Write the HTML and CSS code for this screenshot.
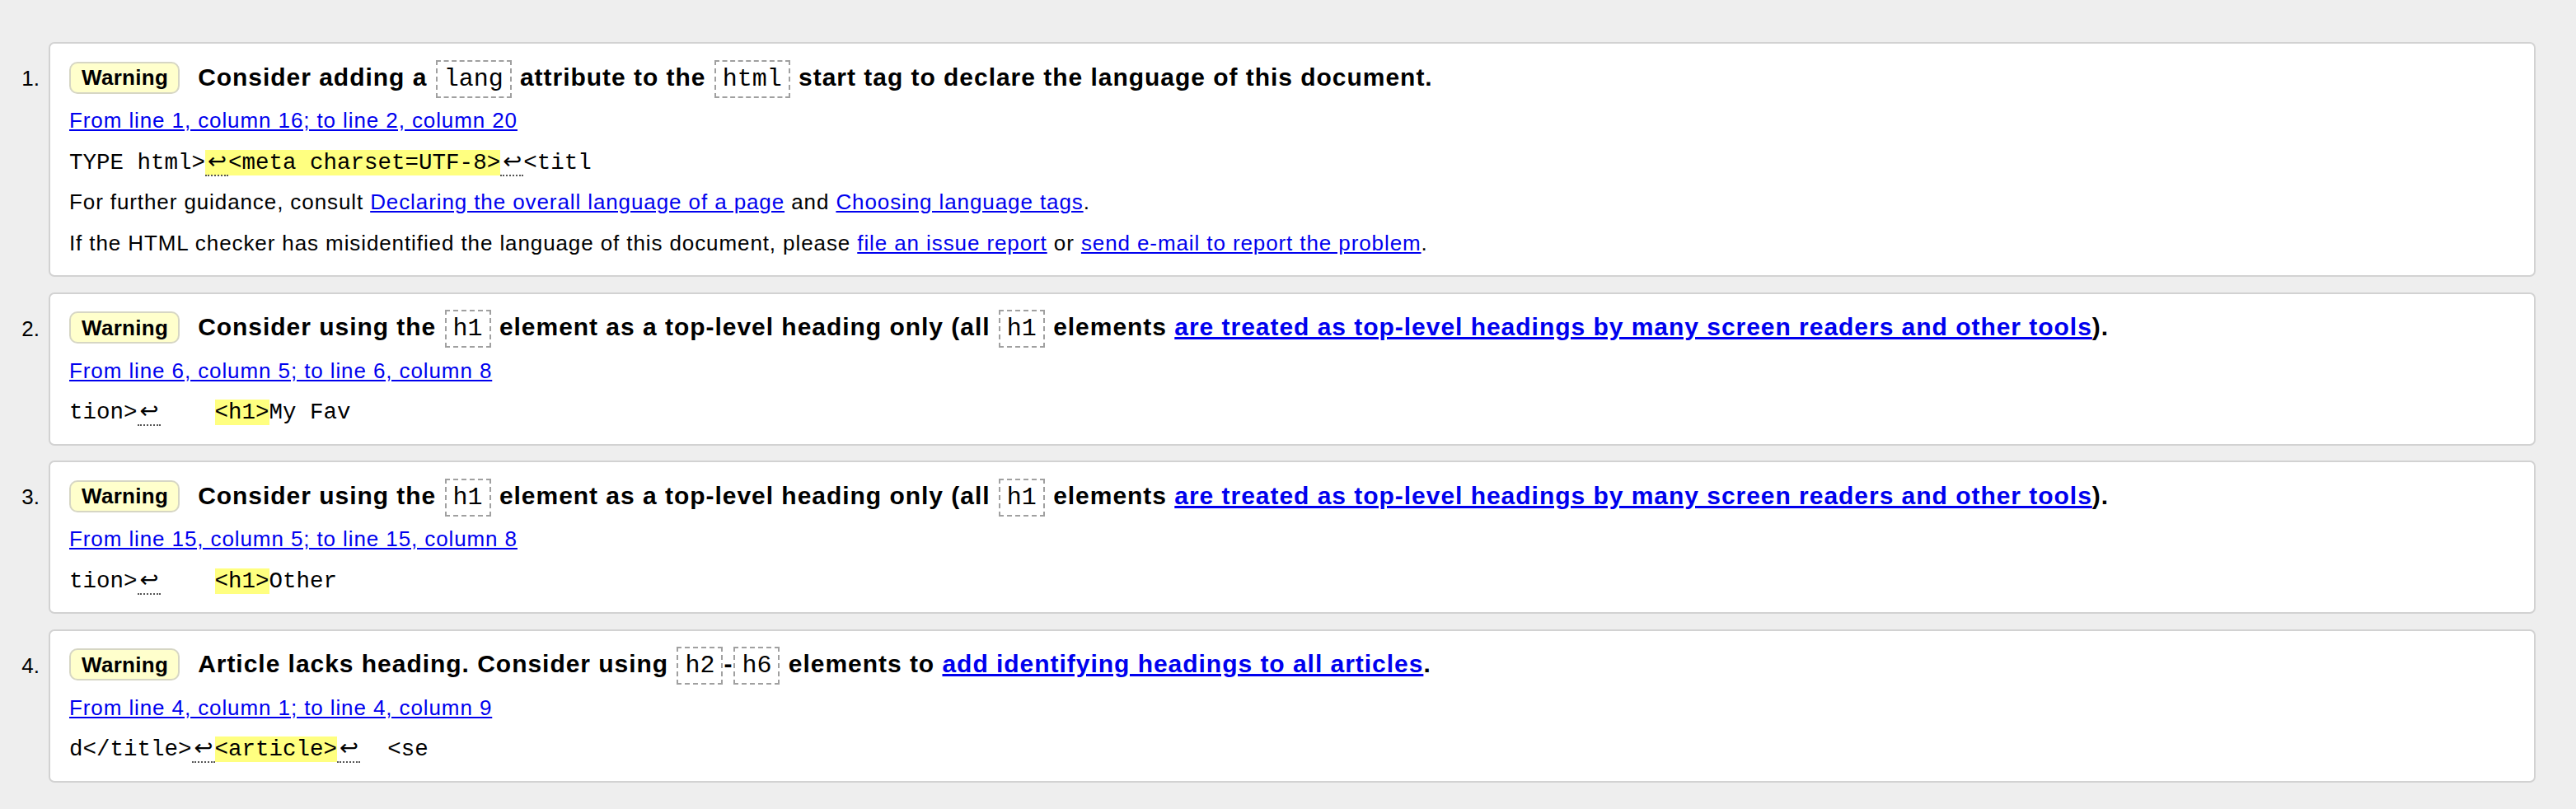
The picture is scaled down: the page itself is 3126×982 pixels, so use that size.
FILE: index.html
```html
<!DOCTYPE html>
<html>
<head>
<meta charset="utf-8">
<title>Messages</title>
<link rel="stylesheet" href="styles.css">
</head>
<body>
<ol class="messages">
  <li class="item">
    <span class="num">1.</span>
    <div class="card">
      <div class="head"><span class="badge">Warning</span><p class="title">Consider adding a <code class="kw">lang</code> attribute to the <code class="kw">html</code> start tag to declare the language of this document.</p></div>
      <p class="row"><a href="#" class="link">From line 1, column 16; to line 2, column 20</a></p>
      <p class="row src">TYPE html&gt;<mark class="hl"><b class="lf">↩</b>&lt;meta charset=UTF-8&gt;</mark><b class="lf">↩</b>&lt;titl</p>
      <p class="row">For further guidance, consult <a href="#" class="link">Declaring the overall language of a page</a> and <a href="#" class="link">Choosing language tags</a>.</p>
      <p class="row">If the HTML checker has misidentified the language of this document, please <a href="#" class="link">file an issue report</a> or <a href="#" class="link">send e-mail to report the problem</a>.</p>
    </div>
  </li>
  <li class="item">
    <span class="num">2.</span>
    <div class="card">
      <div class="head"><span class="badge">Warning</span><p class="title">Consider using the <code class="kw">h1</code> element as a top-level heading only (all <code class="kw">h1</code> elements <a href="#" class="link">are treated as top-level headings by many screen readers and other tools</a>).</p></div>
      <p class="row"><a href="#" class="link">From line 6, column 5; to line 6, column 8</a></p>
      <p class="row src">tion&gt;<b class="lf">↩</b>    <mark class="hl">&lt;h1&gt;</mark>My Fav</p>
    </div>
  </li>
  <li class="item">
    <span class="num">3.</span>
    <div class="card">
      <div class="head"><span class="badge">Warning</span><p class="title">Consider using the <code class="kw">h1</code> element as a top-level heading only (all <code class="kw">h1</code> elements <a href="#" class="link">are treated as top-level headings by many screen readers and other tools</a>).</p></div>
      <p class="row"><a href="#" class="link">From line 15, column 5; to line 15, column 8</a></p>
      <p class="row src">tion&gt;<b class="lf">↩</b>    <mark class="hl">&lt;h1&gt;</mark>Other</p>
    </div>
  </li>
  <li class="item">
    <span class="num">4.</span>
    <div class="card">
      <div class="head"><span class="badge">Warning</span><p class="title">Article lacks heading. Consider using <code class="kw">h2</code>-<code class="kw">h6</code> elements to <a href="#" class="link">add identifying headings to all articles</a>.</p></div>
      <p class="row"><a href="#" class="link">From line 4, column 1; to line 4, column 9</a></p>
      <p class="row src">d&lt;/title&gt;<b class="lf">↩</b><mark class="hl">&lt;article&gt;</mark><b class="lf">↩</b>  &lt;se</p>
    </div>
  </li>
</ol>
</body>
</html>
```

FILE: styles.css
```css
html, body {
  margin: 0;
  padding: 0;
  background: #eeeeee;
}

body {
  font-family: "Liberation Sans", Arial, sans-serif;
  font-size: 26px;
  color: #000;
}

.messages {
  list-style: none;
  margin: 0;
  padding: 51px 49px 0 0;
  display: flex;
  flex-direction: column;
  gap: 18.5px;
}

.item {
  display: flex;
  align-items: flex-start;
}

.num {
  width: 48px;
  margin-right: 11px;
  flex: none;
  text-align: right;
  line-height: 30px;
  padding-top: 29px;
}

.card {
  flex: 1;
  background: #fff;
  border: 2px solid #d2d2d2;
  border-radius: 7px;
  padding: 16px 20px 14px 23px;
}

.head {
  display: flex;
  align-items: center;
  gap: 22px;
  height: 50px;
  margin-bottom: 3px;
}

.badge {
  flex: none;
  font-weight: bold;
  font-size: 26px;
  letter-spacing: 0.3px;
  line-height: 30px;
  padding: 2.5px 12px 2.5px 13px;
  background: #ffffcc;
  border: 2px solid #d6d6c4;
  border-radius: 10px;
}

.title {
  margin: 0;
  font-weight: bold;
  font-size: 30px;
  letter-spacing: 0.97px;
  line-height: 48px;
  white-space: nowrap;
}

.kw {
  display: inline-block;
  font-family: "Liberation Mono", "Courier New", monospace;
  font-weight: normal;
  font-size: 30px;
  letter-spacing: 0;
  line-height: 42px;
  padding: 0 8px;
  margin: 0 1px;
  border: 2px dashed #a0a0a0;
}

.row {
  margin: 0;
  line-height: 49.5px;
  letter-spacing: 0.9px;
  white-space: nowrap;
}

.link {
  color: #0000ee;
  text-decoration: underline;
}

.src {
  font-family: "Liberation Mono", "Courier New", monospace;
  font-size: 27.5px;
  letter-spacing: 0;
  white-space: pre;
  line-height: 46.5px;
  padding-top: 3px;
}

.hl {
  background: #ffff80;
  color: inherit;
}

.lf {
  font-family: "DejaVu Sans", sans-serif;
  font-weight: normal;
  font-size: 27.5px;
  line-height: 20px;
  padding: 0 2px 1px 3px;
  border-bottom: 2px dotted #555;
}
```
